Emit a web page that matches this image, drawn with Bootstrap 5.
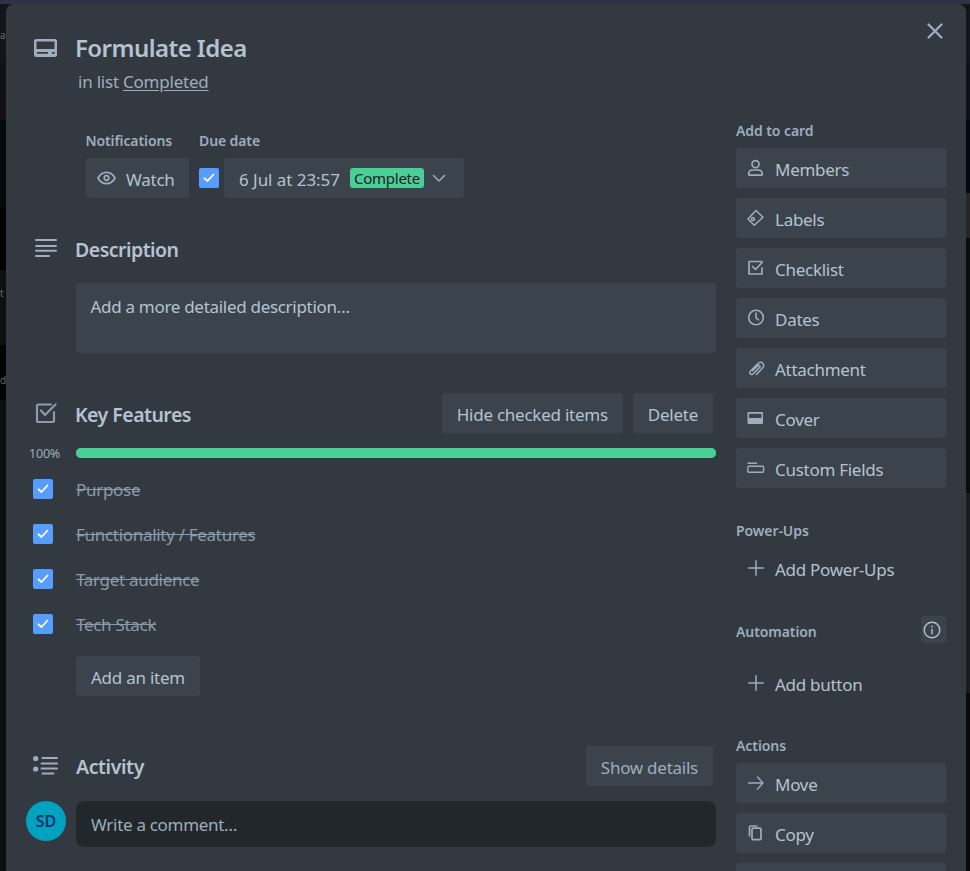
<!DOCTYPE html>
<html lang="en">
<head>
<meta charset="utf-8">
<title>Formulate Idea</title>
<link href="https://cdn.jsdelivr.net/npm/bootstrap@5.3.0/dist/css/bootstrap.min.css" rel="stylesheet">
<style>
html,body{height:871px;overflow:hidden}
body{position:relative;padding-top:4px;font-family:"Noto Sans","Open Sans",sans-serif;font-size:16px;line-height:20px;color:#b6c2cf;
 background:linear-gradient(#2f3244 0 4px,#131518 4px 63px,#0f1114 63px 120px,#030a0c 120px 208px,#010101 208px 270px,#0d0f11 270px 345px,#030404 345px 400px,#0c0f10 400px 871px)}
.peek{position:absolute;left:0;color:#666b70;font-size:10px;line-height:12px}
.bgright{position:absolute;right:0;top:193px;width:4px;height:678px;background:linear-gradient(#262626 0 45px,#0b0c0c 45px 300px,#1a1c1d 300px 500px,#0a0a0a 500px)}
.dlg{position:relative;margin-left:6px;width:960px;height:867px;background:#323940;border-radius:8px 8px 0 0;overflow:hidden;display:flex}
.closer{position:absolute;right:21px;top:17px;width:20px;height:20px;color:#9fadbc}
.ic{color:#9fadbc;flex:none;display:block}
.maincol{width:710px;flex:none;padding-top:29px}
.gut{width:70px;flex:none;padding-left:27px}
.ttl{font-size:24px;line-height:30px;font-weight:600;color:#b6c2cf;margin:0 0 0 -1px;letter-spacing:-.55px}
.sect{font-size:19.5px;line-height:24px;font-weight:600;color:#b6c2cf;margin:0 0 0 -1px;letter-spacing:-.52px}
.sub{color:#9fadbc;font-size:17px;line-height:20px;letter-spacing:-.22px;margin:9px 0 0 72px}
.sub u{text-underline-offset:2px}
.lbl{font-size:14px;line-height:16px;font-weight:600;color:#9fadbc;letter-spacing:-.1px}
.btn.bb{background:#3b444c;color:#b6c2cf;border:0;border-radius:3px;height:40px;font-size:17px;line-height:20px;padding:3px 15px 0;display:inline-flex;align-items:center;letter-spacing:-.25px;white-space:nowrap}
.bb svg{margin-top:-3px}
.cb{width:20px;height:20px;background:#579dff;border-radius:2px;display:flex;align-items:center;justify-content:center;flex:none}
.tagc{background:#4bce97;color:#1d2125;height:20px;border-radius:3px;font-size:15px;padding:0 4px;line-height:20px;letter-spacing:-.25px;margin-top:-3px}
.desc{background:#3b444c;border-radius:3px;height:70px;width:640px;padding:14px 14.500px;font-size:17px;color:#b6c2cf;letter-spacing:-.3px;margin:21px 0 0 70px}
.progress.barrow{height:10px;width:640px;background:#4bce97;border-radius:5px}
.progress.barrow .progress-bar{background:#4bce97}
.pct{font-size:12.500px;line-height:16px;color:#9fadbc;letter-spacing:-.2px;width:70px;padding-left:23px;flex:none;margin-top:-2px}
.itmrow{padding-left:27px;margin-bottom:25px;height:20px}
.itm{font-size:17px;color:#8c9bab;text-decoration:line-through;letter-spacing:-.3px;line-height:20px;margin:1px 0 0 23px}
.cmt{background:#22272b;border-radius:8px;height:46px;width:640px;color:#9fadbc;font-size:17px;padding:2px 15px 0;display:flex;align-items:center;letter-spacing:-.3px}
.ava{width:40px;height:40px;border-radius:50%;background:#00a3bf;color:#09326c;font-size:16px;font-weight:600;display:flex;align-items:center;justify-content:center;flex:none;margin:0 10px 0 20px}
.sidecol{width:210px;margin-left:20px;padding-top:119px;flex:none}
.sl{font-size:14px;line-height:16px;font-weight:600;color:#9fadbc;letter-spacing:-.08px;margin-bottom:9px}
.sb{width:210px;height:40px;background:#3b444c;border-radius:3px;display:flex;align-items:center;padding:3px 11px 0;color:#b6c2cf;font-size:17px;letter-spacing:-.28px;margin-bottom:10px;gap:10px}
.sb.plainb{background:transparent}
.sb svg{color:#9fadbc;flex:none;margin-top:-3px}
.infob{width:25px;height:27px;background:#3b444c;border-radius:3px;display:flex;align-items:center;justify-content:center}
</style>
</head>
<body>
<span class="peek" style="top:29px">a</span>
<span class="peek" style="top:287px">t</span>
<span class="peek" style="top:374px">d</span>
<div class="bgright"></div>
<svg width="0" height="0" class="position-absolute"><symbol id="tick" viewBox="0 0 12 10"><path d="M1.500 5.300 4.500 8l6-6.500" fill="none" stroke="#fff" stroke-width="1.800" stroke-linecap="round" stroke-linejoin="round"/></symbol>
<symbol id="plus" viewBox="0 0 18 18"><path d="M9 1.800v14.400M1.800 9h14.400" fill="none" stroke="currentColor" stroke-width="1.500" stroke-linecap="round"/></symbol></svg>

<div class="dlg">
 <svg class="closer" viewBox="0 0 20 20" fill="none" stroke="currentColor" stroke-width="2.300" stroke-linecap="round"><path d="M3.500 3.500 16.500 16.500M16.500 3.500 3.500 16.500"/></svg>

 <div class="maincol">
  <div class="d-flex align-items-center">
   <div class="gut" style="padding-left:28px"><svg class="ic" width="23" height="18" viewBox="0 0 23 18"><path fill="currentColor" fill-rule="evenodd" d="M2.500 0h18A2.500 2.500 0 0 1 23 2.500v13a2.500 2.500 0 0 1-2.500 2.500h-18A2.500 2.500 0 0 1 0 15.500v-13A2.500 2.500 0 0 1 2.500 0ZM2.500 2.500V10h18V2.500ZM3 13v1.800h11V13Zm15 0v1.800h2.500V13Z"/></svg></div>
   <h1 class="ttl">Formulate Idea</h1>
  </div>
  <div class="sub">in list <u>Completed</u></div>

  <div class="d-flex" style="margin:41px 0 0 79.500px">
   <div class="lbl" style="width:113.500px">Notifications</div>
   <div class="lbl">Due date</div>
  </div>
  <div class="d-flex align-items-center" style="margin:9px 0 0 80px">
   <button type="button" class="btn bb" style="width:103px;padding-left:11px;padding-right:11px;gap:10px"><svg class="ic" width="19" height="14" viewBox="0 0 19 14" fill="none" stroke="currentColor" stroke-width="1.700"><path d="M1 7C3 3.200 6 1.300 9.500 1.300S16 3.200 18 7c-2 3.800-5 5.700-8.500 5.700S3 10.800 1 7Z"/><circle cx="9.500" cy="7" r="2.300"/></svg>Watch</button>
   <div class="cb" style="margin-left:10px"><svg width="12" height="10"><use href="#tick"/></svg></div>
   <button type="button" class="btn bb" style="margin-left:5px;width:240px;gap:10px;letter-spacing:-.05px">6 Jul at 23:57<span class="tagc">Complete</span><svg class="ic" width="14" height="9" viewBox="0 0 14 9" fill="none" stroke="currentColor" stroke-width="1.500" stroke-linecap="round" stroke-linejoin="round" style="margin-left:-2px"><path d="M1.500 1.500 7 7l5.500-5.500"/></svg></button>
  </div>

  <div class="d-flex align-items-center" style="margin-top:40px">
   <div class="gut" style="padding-left:29px"><svg class="ic" width="22" height="24" viewBox="0 0 22 24" fill="currentColor"><rect y="1" width="22" height="2" rx="1"/><rect y="7" width="22" height="2" rx="1"/><rect y="11.700" width="22" height="2" rx="1"/><rect y="17" width="15" height="2" rx="1"/></svg></div>
   <h2 class="sect">Description</h2>
  </div>
  <div class="desc">Add a more detailed description…</div>

  <div class="d-flex align-items-center" style="margin-top:40px;width:707px">
   <div class="gut" style="padding-left:29px"><svg class="ic" width="22" height="22" viewBox="0 0 22 22" fill="none" stroke="#8c9bab" stroke-width="2.200" stroke-linecap="round" stroke-linejoin="round"><path d="M19 10v8.500a1.500 1.500 0 0 1-1.500 1.500H3.500A1.500 1.500 0 0 1 2 18.500V4a1.500 1.500 0 0 1 1.500-1.500H16"/><path d="M6 8.500 10 13 20.500 2.500"/></svg></div>
   <h2 class="sect" style="padding-top:3px">Key Features</h2>
   <div class="ms-auto d-flex" style="gap:10px">
    <button type="button" class="btn bb">Hide checked items</button>
    <button type="button" class="btn bb">Delete</button>
   </div>
  </div>
  <div class="d-flex align-items-start" style="margin-top:15px">
   <div class="pct">100%</div>
   <div class="progress barrow"><div class="progress-bar" style="width:100%"></div></div>
  </div>

  <div style="margin-top:17px">
   <div class="d-flex itmrow"><div class="cb"><svg width="12" height="10"><use href="#tick"/></svg></div><span class="itm">Purpose</span></div>
   <div class="d-flex itmrow"><div class="cb"><svg width="12" height="10"><use href="#tick"/></svg></div><span class="itm">Functionality / Features</span></div>
   <div class="d-flex itmrow"><div class="cb"><svg width="12" height="10"><use href="#tick"/></svg></div><span class="itm">Target audience</span></div>
   <div class="d-flex itmrow"><div class="cb"><svg width="12" height="10"><use href="#tick"/></svg></div><span class="itm">Tech Stack</span></div>
  </div>
  <button type="button" class="btn bb" style="margin:-3px 0 0 70px">Add an item</button>

  <div class="d-flex align-items-center" style="margin-top:50px;width:707px">
   <div class="gut"><svg class="ic" width="26" height="24" viewBox="0 0 26 24" fill="currentColor"><circle cx="2.700" cy="4.500" r="2.600"/><circle cx="2.700" cy="15" r="2.600"/><rect x="8.500" y="3" width="16.500" height="2" rx="1"/><rect x="7.500" y="8.500" width="17.500" height="2" rx="1"/><rect x="7.500" y="13.500" width="17.500" height="2" rx="1"/><rect x="8.500" y="18.500" width="13" height="2" rx="1"/></svg></div>
   <h2 class="sect" style="padding-top:2px;margin-left:0;letter-spacing:-.4px">Activity</h2>
   <button type="button" class="btn bb ms-auto" style="color:#9fadbc">Show details</button>
  </div>
  <div class="d-flex align-items-start" style="margin-top:15px">
   <div class="ava">SD</div>
   <div class="cmt">Write a comment…</div>
  </div>
 </div>

 <div class="sidecol">
  <div class="sl">Add to card</div>
  <div class="sb"><svg width="18" height="18" viewBox="0 0 18 18" fill="none" stroke="currentColor" stroke-width="1.700"><circle cx="8.500" cy="5.200" r="3.500"/><path d="M1.700 15.200c0-2.800 2-4.200 4-4.200h5.600c2 0 4 1.400 4 4.200 0 .6-.4 1-1 1h-11.600c-.6 0-1-.4-1-1Z"/></svg>Members</div>
  <div class="sb"><svg width="18" height="18" viewBox="0 0 18 18" fill="none" stroke="currentColor" stroke-width="1.500" stroke-linejoin="round"><path d="M9 1.500 16 8.300 7.300 16.200 1 10Z"/><circle cx="6" cy="10" r="1.500"/></svg>Labels</div>
  <div class="sb"><svg width="18" height="18" viewBox="0 0 18 18" fill="none" stroke="currentColor" stroke-width="1.700" stroke-linecap="round" stroke-linejoin="round"><path d="M15 9v6H2V2.500h12"/><path d="M5.500 7.500 8.500 10.500 15.500 3"/></svg>Checklist</div>
  <div class="sb"><svg width="18" height="18" viewBox="0 0 18 18" fill="none" stroke="currentColor" stroke-width="1.600" stroke-linecap="round" stroke-linejoin="round"><circle cx="9" cy="8.500" r="7.300"/><path d="M9 4V8.800l2.500 2"/></svg>Dates</div>
  <div class="sb"><svg width="18" height="18" viewBox="0 0 18 18" fill="none" stroke="currentColor" stroke-width="1.500" stroke-linecap="round" stroke-linejoin="round"><path d="M9.500 15.500 15.500 9c1.500-1.500 1.500-3.500.3-4.700-1.300-1.300-3.300-1.200-4.800.2L3.500 12c-1 1-.9 2.200-.2 2.900.7.700 2 .8 3-.2l6.300-6.300c.5-.6.5-1.300 0-1.800-.5-.5-1.200-.5-1.800 0L5.500 11.800"/></svg>Attachment</div>
  <div class="sb"><svg width="18" height="18" viewBox="0 0 18 18" fill="currentColor"><path fill-rule="evenodd" d="M1.500 3h13.500a1 1 0 0 1 1 1v10a1 1 0 0 1-1 1H1.500a1 1 0 0 1-1-1V4a1 1 0 0 1 1-1Zm.5 1.700v4.200h12.500V4.700Z"/></svg>Cover</div>
  <div class="sb"><svg width="18" height="18" viewBox="0 0 18 18" fill="none" stroke="currentColor" stroke-width="1.400" stroke-linecap="round"><path d="M1 4.300h8.500"/><rect x=".8" y="7.300" width="15.800" height="6" rx="1"/></svg>Custom Fields</div>
  <div class="sl" style="margin-top:35px;margin-bottom:9px">Power-Ups</div>
  <div class="sb plainb"><svg width="18" height="18"><use href="#plus"/></svg>Add Power-Ups</div>
  <div class="d-flex justify-content-between align-items-center" style="margin-top:28px;height:27px"><span class="sl mb-0 mt-1">Automation</span><div class="infob"><svg width="18" height="18" viewBox="0 0 18 18" fill="none" stroke="#b6c2cf" stroke-width="1.400" class="me-1"><circle cx="9" cy="9" r="7.800"/><path d="M9 8v5.300M9 4.700v1.700"/></svg></div></div>
  <div class="sb plainb" style="margin-top:20px"><svg width="18" height="18"><use href="#plus"/></svg>Add button</div>
  <div class="sl" style="margin-top:35px">Actions</div>
  <div class="sb"><svg width="18" height="18" viewBox="0 0 18 18" fill="none" stroke="currentColor" stroke-width="1.400" stroke-linecap="round" stroke-linejoin="round"><path d="M1.500 9H15.500M10.500 3 16 9l-5.500 6"/></svg>Move</div>
  <div class="sb"><svg width="18" height="18" viewBox="0 0 18 18" fill="none" stroke="currentColor" stroke-width="1.700" stroke-linejoin="round"><rect x="5" y="4.200" width="9" height="11.500" rx="1.200"/><path d="M2.500 12.500V3.200A1.200 1.200 0 0 1 3.700 2H10.500"/></svg>Copy</div>
  <div class="sb"></div>
 </div>
</div>
</body>
</html>
